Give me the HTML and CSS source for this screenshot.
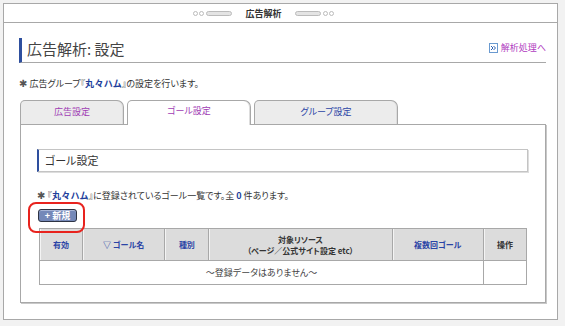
FILE: index.html
```html
<!DOCTYPE html>
<html lang="ja">
<head>
  <meta charset="UTF-8">
  <title>広告解析 - 設定</title>
  <link rel="stylesheet" href="styles.css">
</head>
<body>
  <div class="page">
    <div class="topbar">
      <span class="deco">
        <span class="dot"></span><span class="dot"></span><span class="pill"></span>
      </span>
      <span class="topbar-title">広告解析</span>
      <span class="deco">
        <span class="pill"></span><span class="dot"></span><span class="dot"></span>
      </span>
    </div>

    <div class="main">
      <div class="title-row">
        <h1>広告解析: 設定</h1>
        <a class="link-next" href="#">
          <svg width="9" height="10" viewBox="0 0 9 10">
            <rect x="0.5" y="0.5" width="8" height="9" fill="#fff" stroke="#6a9ad0"/>
            <path d="M2 3 L4 5 L2 7 M4.5 3 L6.5 5 L4.5 7" fill="none" stroke="#2a5fb0" stroke-width="1"/>
          </svg>
          解析処理へ
        </a>
      </div>

      <p class="note"><span class="mark">✱</span> 広告グループ『<b class="name">丸々ハム</b>』の設定を行います。</p>

      <div class="tabs">
        <a class="tab tab-first" href="#">広告設定</a>
        <a class="tab tab-active" href="#">ゴール設定</a>
        <a class="tab tab-last" href="#">グループ設定</a>
      </div>

      <div class="panel">
        <div class="section-title">ゴール設定</div>

        <p class="note note-list"><span class="mark">✱</span> 『<b class="name">丸々ハム</b>』に登録されているゴール一覧です。全 <b class="count">0</b> 件あります。</p>

        <div class="btn-wrap">
          <button class="btn-new">+ 新規</button>
          <span class="marker"></span>
        </div>

        <table class="goals">
          <thead>
            <tr>
              <th class="c-valid"><a href="#">有効</a></th>
              <th class="c-name"><a href="#">▽ ゴール名</a></th>
              <th class="c-type"><a href="#">種別</a></th>
              <th class="c-res">対象リソース<br>（ページ／公式サイト設定 etc）</th>
              <th class="c-multi"><a href="#">複数回ゴール</a></th>
              <th class="c-op">操作</th>
            </tr>
          </thead>
          <tbody>
            <tr>
              <td colspan="5" class="empty">〜登録データはありません〜</td>
              <td></td>
            </tr>
          </tbody>
        </table>
      </div>
    </div>
  </div>
</body>
</html>
```

FILE: styles.css
```css
body {
  margin: 0;
  background-color: #f2f2f2;
  font-family: "Noto Sans CJK JP", "DejaVu Sans", sans-serif;
  font-size: 9px;
  font-feature-settings: "palt";
  color: #333;
}

a {
  text-decoration: none;
}

.page {
  margin: 3px 0 0 3px;
  width: 553px;
  height: 315px;
  background-color: white;
  border: 1px solid #a8a8a8;
}

/* 上部バー */
.topbar {
  height: 18px;
  border-bottom: 1px solid #a8a8a8;
  display: flex;
  align-items: center;
  justify-content: center;
  gap: 12px;
  padding-right: 34px;
}

.topbar-title {
  font-weight: bold;
  font-size: 9px;
  color: #333;
}

.deco {
  display: flex;
  align-items: center;
  gap: 1px;
}

.dot {
  width: 3px;
  height: 3px;
  border: 1px solid #bbb;
  border-radius: 50%;
}

.pill {
  width: 24px;
  height: 3px;
  border: 1px solid #bbb;
  background-color: #e4e4e4;
  border-radius: 3px;
  margin: 0 1px;
}

.main {
  padding: 15px 11px 0 15px;
}

/* タイトル */
.title-row {
  display: flex;
  justify-content: space-between;
  align-items: flex-start;
  border-left: 3px solid #2e4f9e;
  border-bottom: 1px solid #a8a8a8;
  height: 24px;
}

h1 {
  margin: 0;
  padding-left: 5px;
  font-size: 15px;
  font-weight: normal;
  line-height: 22px;
  color: #444;
}

.link-next {
  display: flex;
  align-items: center;
  gap: 3px;
  margin-top: 3px;
  color: #b03cc0;
  font-size: 9px;
}

.note {
  margin: 13px 0 0 0;
  font-size: 9px;
  line-height: 14px;
}

.mark {
  font-size: 10px;
  font-weight: bold;
  color: #555;
}

.name {
  color: #1e3f9c;
  letter-spacing: 0.5px;
}

.count {
  color: #1e3f9c;
}

/* タブ */
.tabs {
  display: flex;
  gap: 3px;
  margin-top: 9px;
  margin-left: 1px;
  height: 24px;
  align-items: flex-end;
}

.tab {
  height: 23px;
  line-height: 22px;
  text-align: center;
  border: 1px solid #a8a8a8;
  border-bottom: none;
  border-radius: 5px 7px 0 0;
  background-color: #ececec;
  color: #a03cb4;
  font-size: 9px;
  box-shadow: inset -1px 0 0 #ddd;
}

.tab-first {
  width: 102px;
}

.tab-active {
  width: 122px;
  height: 24px;
  line-height: 20px;
  background-color: white;
  position: relative;
  top: 1px;
  z-index: 1;
}

.tab-last {
  width: 142px;
  color: #2b44a6;
}

/* パネル */
.panel {
  margin-left: 1px;
  width: 491px;
  height: 153px;
  border: 1px solid #a8a8a8;
  box-shadow: 1px 1px 0 #c8c8c8;
  padding: 24px 17px 0 16px;
}

.section-title {
  height: 21px;
  line-height: 21px;
  border: 1px solid #c4c4c4;
  border-left: 2px solid #2e4f9e;
  padding-left: 6px;
  font-size: 11px;
  color: #333;
  box-shadow: 1px 1px 0 #ddd;
}

.note-list {
  margin-top: 16px;
}

.btn-wrap {
  position: relative;
  margin-top: 6px;
  margin-left: 1px;
  height: 13px;
}

.btn-new {
  display: block;
  width: 39px;
  height: 13px;
  padding: 0;
  font-family: inherit;
  font-size: 9px;
  font-weight: bold;
  line-height: 11px;
  color: white;
  background-color: #7488b8;
  border: 1px solid #2e3444;
  border-radius: 3px;
  box-shadow: inset 0 1px 0 #a6b4d6;
}

.marker {
  position: absolute;
  left: -10px;
  top: -7px;
  width: 53px;
  height: 27px;
  border: 2px solid #e8231e;
  border-radius: 8px;
}

/* 一覧テーブル */
.goals {
  margin: 6px 0 0 2px;
  width: 488px;
  border-collapse: collapse;
  border: 1px solid #8c8c8c;
}

.goals th {
  height: 31px;
  background-color: #dcdcdc;
  border: 1px solid #a8a8a8;
  box-shadow: inset 1px 0 0 #f4f4f4;
  font-size: 8px;
  font-weight: bold;
  line-height: 11px;
  color: #333;
  padding: 0;
}

.goals th a {
  color: #2b44a6;
}

.c-valid { width: 42px; }
.c-name { width: 82px; }
.c-type { width: 43px; }
.c-res { width: 183px; }
.c-multi { width: 91px; }
.c-op { width: 42px; }

.goals td {
  height: 21px;
  border: 1px solid #a8a8a8;
  font-size: 9px;
  color: #444;
}

.empty {
  text-align: center;
}
```
